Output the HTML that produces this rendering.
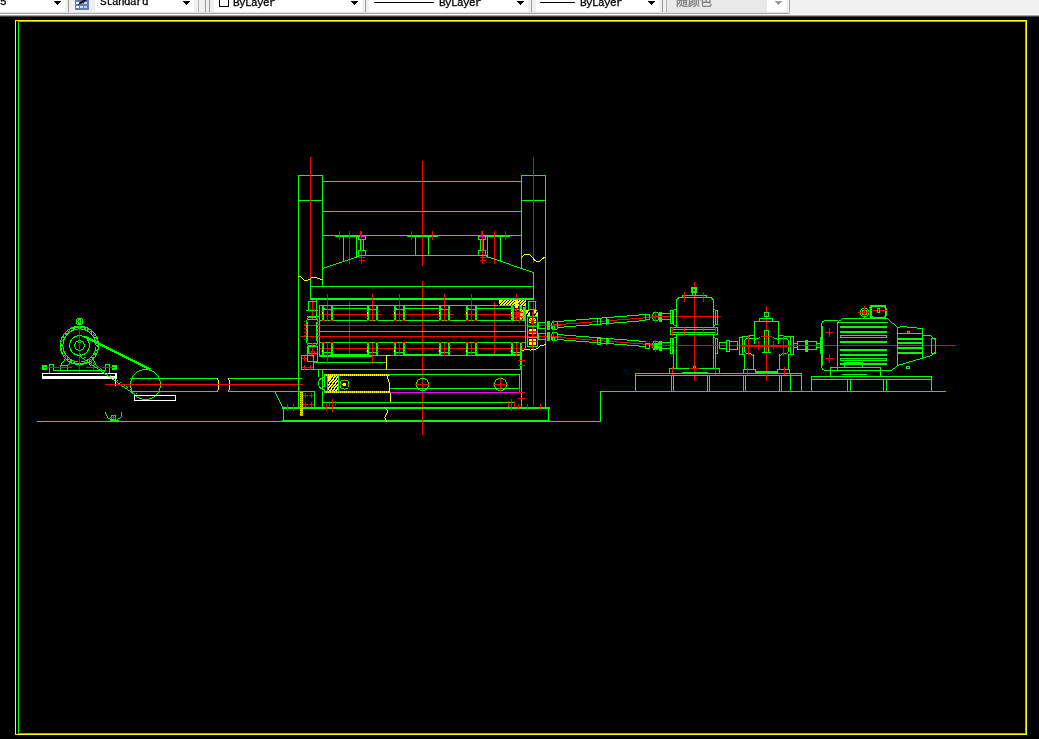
<!DOCTYPE html>
<html>
<head>
<meta charset="utf-8">
<title>AutoCAD</title>
<style>
html,body{margin:0;padding:0;background:#000;overflow:hidden}
body{width:1039px;height:739px;position:relative;font-family:"Liberation Mono","Noto Sans CJK SC",monospace;}
#tb{position:absolute;left:0;top:0;width:1039px;height:14px;background:#f0f0f0;overflow:hidden}
#tbshadow{position:absolute;left:0;top:14px;width:1039px;height:3px;background:linear-gradient(#fafafa 0,#fafafa 33%,#a0a0a0 34%,#a0a0a0 66%,#404040 67%,#404040 100%)}
.cb{position:absolute;top:-8px;height:20px;background:#fff;box-sizing:border-box;filter:grayscale(1)}
#tbline{position:absolute;left:0;top:12px;width:790px;height:2px;background:linear-gradient(#e2e4ea 0,#e2e4ea 50%,#a2a2a2 50%,#a2a2a2 100%)}
.cb span.t{position:absolute;top:4px;font-size:11px;line-height:12px;letter-spacing:-0.6px;color:#000;white-space:nowrap;-webkit-text-stroke:0.3px currentColor}
.arr{--c:#000;position:absolute;top:9px;width:7px;height:4px;background:linear-gradient(var(--c),var(--c)) 0 0/7px 1px no-repeat,linear-gradient(var(--c),var(--c)) 1px 1px/5px 1px no-repeat,linear-gradient(var(--c),var(--c)) 2px 2px/3px 1px no-repeat,linear-gradient(var(--c),var(--c)) 3px 3px/1px 1px no-repeat}
.sep{position:absolute;top:0;width:1px;height:12px;background:#9a9a9a}
.ln{position:absolute;top:10px;height:1px;background:#000}
#draw{position:absolute;left:0;top:0}
</style>
</head>
<body>
<div id="tb">
  <div class="cb" style="left:0;width:65px"><span class="t" style="left:0px">5</span><div class="arr" style="left:54px"></div></div>
  <div class="sep" style="left:68px"></div>
  <svg style="position:absolute;left:75px;top:-3px" width="14" height="13" viewBox="0 0 14 13"><rect x="0" y="0" width="14" height="13" fill="#5b80b4"/><rect x="1" y="1" width="3" height="2" fill="#fff"/><rect x="5" y="1" width="3" height="2" fill="#e8eefc"/><rect x="9" y="1" width="3" height="2" fill="#dfe8fb"/><rect x="1" y="5" width="3" height="2" fill="#fff"/><rect x="5" y="5" width="3" height="2" fill="#dfe8fb"/><rect x="9" y="5" width="3" height="2" fill="#c4d6fa"/><rect x="1" y="9" width="3" height="2" fill="#fff"/><rect x="5" y="9" width="3" height="2" fill="#d4e2fc"/><rect x="9" y="9" width="3" height="2" fill="#bcd0fa"/><path d="M3 8L5 5L10 2L12 3L8 6Z" fill="#111"/></svg>
  <div class="cb" style="left:95px;width:99px"><span class="t" style="left:5px">Standard</span><div class="arr" style="left:88px"></div></div>
  <div class="sep" style="left:198px;background:#b8b8b8"></div>
  <div class="sep" style="left:205px"></div>
  <div class="sep" style="left:209px"></div>
  <div class="cb" style="left:214px;width:148px"><div style="position:absolute;left:5px;width:8px;height:8px;border:1px solid #000;top:5px"></div><span class="t" style="left:19px;top:5px">ByLayer</span><div class="arr" style="left:137px"></div></div>
  <div class="sep" style="left:365px"></div>
  <div class="cb" style="left:369px;width:159px"><div class="ln" style="left:5px;width:60px"></div><span class="t" style="left:70px;top:5px">ByLayer</span><div class="arr" style="left:148px"></div></div>
  <div class="sep" style="left:531px"></div>
  <div class="cb" style="left:536px;width:123px"><div class="ln" style="left:4px;width:35px"></div><span class="t" style="left:44px;top:5px">ByLayer</span><div class="arr" style="left:112px"></div></div>
  <div class="sep" style="left:662px"></div>
  <div class="cb" style="left:666px;width:120px;background:#e9e9e9;border-right:1px solid #a8a8a8;border-left:1px solid #b4b4b4"><span class="t" style="left:9px;top:4px;color:#787878;letter-spacing:0;font-size:12px;line-height:14px">随颜色</span><div style="position:absolute;left:100px;top:0;width:19px;height:20px;background:#fff"></div><div class="arr" style="left:108px;--c:#a0a0a0"></div></div>
  <div class="sep" style="left:789px;background:#a8a8a8;height:13px"></div>
  <div id="tbline"></div>
</div>
<div id="tbshadow"></div>
<svg id="draw" width="1039" height="739" viewBox="0 0 1039 739" shape-rendering="crispEdges">
<rect x="15.5" y="20.5" width="1011" height="714" fill="none" stroke="#ffff00" stroke-width="1"/>
<rect x="18.5" y="21.5" width="1007" height="712" fill="none" stroke="#00ff00" stroke-width="1"/>
<rect x="37" y="421" width="564" height="1" fill="#00ff00"/>
<rect x="282" y="420" width="268" height="1" fill="#00ff00"/>
<rect x="600" y="391" width="1" height="31" fill="#00ff00"/>
<rect x="600" y="391" width="346" height="1" fill="#00ff00"/>
<circle cx="79.5" cy="321.5" r="3.3" fill="none" stroke="#00ff00" stroke-width="1"/>
<ellipse cx="79.5" cy="321.5" rx="1.5" ry="2.5" fill="none" stroke="#00ff00"/>
<rect x="79" y="324" width="1" height="3" fill="#00ff00"/>
<circle cx="79.5" cy="345.5" r="19.2" fill="none" stroke="#00ff00" stroke-width="1"/>
<circle cx="79.5" cy="345.5" r="16.6" fill="none" stroke="#00ff00" stroke-width="1"/>
<circle cx="79.5" cy="345.5" r="18" fill="none" stroke="#00ff00" stroke-width="1" stroke-dasharray="2 2"/>
<path d="M73 328 A18 18 0 0 1 86 328 M73 363 A18 18 0 0 0 86 363" fill="none" stroke="#00ff00" stroke-width="2"/>
<circle cx="79.5" cy="345.5" r="10" fill="none" stroke="#00ff00" stroke-width="1"/>
<circle cx="79.5" cy="345.5" r="4.8" fill="none" stroke="#00ff00" stroke-width="1"/>
<circle cx="79.5" cy="342.5" r="0.8" fill="#00ff00" stroke="#00ff00" stroke-width="1"/>
<rect x="79" y="325" width="1" height="48" fill="#ff0000"/>
<rect x="65" y="358" width="1" height="1" fill="#00ff00"/>
<rect x="64" y="359" width="1" height="2" fill="#00ff00"/>
<rect x="63" y="361" width="1" height="1" fill="#00ff00"/>
<rect x="62" y="362" width="1" height="1" fill="#00ff00"/>
<rect x="61" y="363" width="1" height="2" fill="#00ff00"/>
<rect x="60" y="365" width="1" height="1" fill="#00ff00"/>
<rect x="70" y="361" width="1" height="1" fill="#00ff00"/>
<rect x="69" y="362" width="1" height="2" fill="#00ff00"/>
<rect x="68" y="364" width="1" height="1" fill="#00ff00"/>
<rect x="67" y="365" width="1" height="1" fill="#00ff00"/>
<rect x="92" y="358" width="1" height="1" fill="#00ff00"/>
<rect x="93" y="359" width="1" height="2" fill="#00ff00"/>
<rect x="94" y="361" width="1" height="2" fill="#00ff00"/>
<rect x="95" y="363" width="1" height="2" fill="#00ff00"/>
<rect x="96" y="365" width="1" height="1" fill="#00ff00"/>
<rect x="87" y="361" width="1" height="1" fill="#00ff00"/>
<rect x="88" y="362" width="1" height="1" fill="#00ff00"/>
<rect x="89" y="363" width="1" height="2" fill="#00ff00"/>
<rect x="90" y="365" width="1" height="1" fill="#00ff00"/>
<rect x="42" y="365" width="5" height="5" fill="#00ff00"/>
<rect x="112" y="365" width="5" height="5" fill="#00ff00"/>
<rect x="46" y="367" width="4" height="1" fill="#00ff00"/>
<rect x="109" y="367" width="4" height="1" fill="#00ff00"/>
<rect x="49" y="364" width="1" height="9" fill="#00ff00"/>
<rect x="49" y="364" width="5" height="1" fill="#00ff00"/>
<rect x="53" y="364" width="1" height="7" fill="#00ff00"/>
<rect x="53" y="370" width="53" height="1" fill="#00ff00"/>
<rect x="105" y="364" width="1" height="7" fill="#00ff00"/>
<rect x="105" y="364" width="5" height="1" fill="#00ff00"/>
<rect x="109" y="364" width="1" height="9" fill="#00ff00"/>
<rect x="60.5" y="365.5" width="7" height="5" fill="none" stroke="#00ff00" stroke-width="1"/>
<rect x="44" y="367" width="15" height="1" fill="#ff0000"/>
<rect x="60" y="367" width="12" height="1" fill="#ff0000"/>
<rect x="86" y="367" width="14" height="1" fill="#ff0000"/>
<rect x="102" y="367" width="13" height="1" fill="#ff0000"/>
<rect x="93" y="362" width="1" height="10" fill="#ff0000"/>
<rect x="42.5" y="373.5" width="74" height="5" fill="none" stroke="#ffffff" stroke-width="1"/>
<rect x="42" y="376" width="75" height="3" fill="#ffffff"/>
<rect x="115" y="373" width="1" height="13" fill="#ffffff"/>
<line x1="84.5" y1="336.5" x2="150.5" y2="369.5" stroke="#00ff00" stroke-width="2"/>
<rect x="77" y="354" width="1" height="1" fill="#00ff00"/>
<rect x="78" y="355" width="2" height="1" fill="#00ff00"/>
<rect x="80" y="356" width="1" height="1" fill="#00ff00"/>
<rect x="81" y="357" width="1" height="1" fill="#00ff00"/>
<rect x="82" y="358" width="2" height="1" fill="#00ff00"/>
<rect x="84" y="359" width="1" height="1" fill="#00ff00"/>
<rect x="85" y="360" width="2" height="1" fill="#00ff00"/>
<rect x="87" y="361" width="1" height="1" fill="#00ff00"/>
<rect x="88" y="362" width="2" height="1" fill="#00ff00"/>
<rect x="90" y="363" width="1" height="1" fill="#00ff00"/>
<rect x="91" y="364" width="1" height="1" fill="#00ff00"/>
<rect x="92" y="365" width="2" height="1" fill="#00ff00"/>
<rect x="94" y="366" width="1" height="1" fill="#00ff00"/>
<rect x="95" y="367" width="2" height="1" fill="#00ff00"/>
<rect x="97" y="368" width="1" height="1" fill="#00ff00"/>
<rect x="98" y="369" width="2" height="1" fill="#00ff00"/>
<rect x="100" y="370" width="1" height="1" fill="#00ff00"/>
<rect x="101" y="371" width="1" height="1" fill="#00ff00"/>
<rect x="102" y="372" width="2" height="1" fill="#00ff00"/>
<rect x="104" y="373" width="1" height="1" fill="#00ff00"/>
<rect x="105" y="374" width="2" height="1" fill="#00ff00"/>
<rect x="107" y="375" width="1" height="1" fill="#00ff00"/>
<rect x="108" y="376" width="2" height="1" fill="#00ff00"/>
<rect x="110" y="377" width="1" height="1" fill="#00ff00"/>
<rect x="111" y="378" width="1" height="1" fill="#00ff00"/>
<rect x="112" y="379" width="2" height="1" fill="#00ff00"/>
<rect x="114" y="380" width="1" height="1" fill="#00ff00"/>
<rect x="115" y="381" width="2" height="1" fill="#00ff00"/>
<rect x="117" y="382" width="1" height="1" fill="#00ff00"/>
<rect x="118" y="383" width="2" height="1" fill="#00ff00"/>
<rect x="120" y="384" width="1" height="1" fill="#00ff00"/>
<rect x="121" y="385" width="1" height="1" fill="#00ff00"/>
<rect x="122" y="386" width="2" height="1" fill="#00ff00"/>
<rect x="124" y="387" width="1" height="1" fill="#00ff00"/>
<rect x="125" y="388" width="2" height="1" fill="#00ff00"/>
<rect x="127" y="389" width="1" height="1" fill="#00ff00"/>
<rect x="128" y="390" width="2" height="1" fill="#00ff00"/>
<rect x="130" y="391" width="1" height="1" fill="#00ff00"/>
<rect x="131" y="392" width="1" height="1" fill="#00ff00"/>
<rect x="132" y="393" width="2" height="1" fill="#00ff00"/>
<rect x="134" y="394" width="1" height="1" fill="#00ff00"/>
<line x1="80.5" y1="354.5" x2="137.5" y2="394.5" stroke="#00ff00" stroke-dasharray="2 2"/>
<circle cx="145.5" cy="384.5" r="15" fill="none" stroke="#00ff00" stroke-width="1"/>
<rect x="130" y="378" width="88" height="1" fill="#00ff00"/>
<rect x="130" y="391" width="88" height="1" fill="#00ff00"/>
<rect x="228" y="378" width="74" height="1" fill="#00ff00"/>
<rect x="228" y="391" width="74" height="1" fill="#00ff00"/>
<path d="M217.5 378.5 Q220.5 385 217.5 391.5" fill="none" stroke="#ffff00" stroke-width="1"/>
<path d="M228.5 378.5 Q231.5 385 228.5 391.5" fill="none" stroke="#ffff00" stroke-width="1"/>
<rect x="105" y="384" width="198" height="1" fill="#ff0000"/>
<rect x="134.5" y="395.5" width="41" height="5" fill="none" stroke="#ffffff" stroke-width="1"/>
<circle cx="113.5" cy="417.5" r="2.5" fill="none" stroke="#00ff00" stroke-width="1"/>
<rect x="111" y="417" width="5" height="1" fill="#ff0000"/>
<rect x="113" y="415" width="1" height="5" fill="#ff0000"/>
<rect x="105" y="412" width="1" height="2" fill="#00ff00"/>
<rect x="106" y="414" width="1" height="2" fill="#00ff00"/>
<rect x="107" y="416" width="1" height="2" fill="#00ff00"/>
<rect x="107" y="417" width="1" height="1" fill="#00ff00"/>
<rect x="108" y="418" width="2" height="1" fill="#00ff00"/>
<rect x="110" y="419" width="1" height="1" fill="#00ff00"/>
<rect x="121" y="412" width="1" height="5" fill="#00ff00"/>
<rect x="117" y="419" width="1" height="1" fill="#00ff00"/>
<rect x="118" y="418" width="2" height="1" fill="#00ff00"/>
<rect x="120" y="417" width="1" height="1" fill="#00ff00"/>
<rect x="121" y="416" width="1" height="1" fill="#00ff00"/>
<rect x="110" y="420" width="9" height="1" fill="#00ff00"/>
<rect x="298" y="175" width="1" height="233" fill="#00ff00"/>
<rect x="322" y="175" width="1" height="112" fill="#00ff00"/>
<rect x="298" y="175" width="25" height="1" fill="#00ff00"/>
<rect x="298" y="200" width="25" height="1" fill="#00ff00"/>
<rect x="521" y="175" width="1" height="94" fill="#00ff00"/>
<rect x="545" y="175" width="1" height="232" fill="#00ff00"/>
<rect x="521" y="175" width="25" height="1" fill="#00ff00"/>
<rect x="521" y="200" width="25" height="1" fill="#00ff00"/>
<rect x="322" y="181" width="200" height="1" fill="#00ff00"/>
<rect x="322" y="211" width="200" height="1" fill="#00ff00"/>
<rect x="322" y="235" width="200" height="1" fill="#00ff00"/>
<rect x="310" y="157" width="1" height="123" fill="#ff0000"/>
<rect x="310" y="279" width="1" height="21" fill="#00ff00"/>
<rect x="422" y="161" width="1" height="105" fill="#ff0000"/>
<rect x="422" y="281" width="1" height="154" fill="#ff0000"/>
<rect x="533" y="157" width="1" height="106" fill="#ff0000"/>
<rect x="533" y="272" width="1" height="28" fill="#00ff00"/>
<rect x="533" y="299" width="1" height="107" fill="#ff0000"/>
<rect x="312" y="298" width="1" height="22" fill="#ff0000"/>
<rect x="335" y="236" width="31" height="1" fill="#00ff00"/>
<rect x="343" y="236" width="1" height="26" fill="#00ff00"/>
<rect x="356" y="236" width="1" height="21" fill="#00ff00"/>
<rect x="339" y="231" width="1" height="9" fill="#ff0000"/>
<rect x="349" y="231" width="1" height="33" fill="#ff0000"/>
<rect x="407" y="236" width="31" height="1" fill="#00ff00"/>
<rect x="415" y="236" width="1" height="20" fill="#00ff00"/>
<rect x="428" y="236" width="1" height="20" fill="#00ff00"/>
<rect x="411" y="231" width="1" height="9" fill="#ff0000"/>
<rect x="432" y="231" width="1" height="9" fill="#ff0000"/>
<rect x="478" y="236" width="32" height="1" fill="#00ff00"/>
<rect x="487" y="236" width="1" height="22" fill="#00ff00"/>
<rect x="500" y="236" width="1" height="26" fill="#00ff00"/>
<rect x="494" y="231" width="1" height="33" fill="#ff0000"/>
<rect x="505" y="231" width="1" height="9" fill="#ff0000"/>
<rect x="358.5" y="235.5" width="7" height="4" fill="none" stroke="#00ff00" stroke-width="1"/>
<rect x="360.5" y="239.5" width="3" height="11" fill="none" stroke="#00ff00" stroke-width="1"/>
<rect x="358.5" y="250.5" width="7" height="5" fill="none" stroke="#00ff00" stroke-width="1"/>
<rect x="361" y="231" width="1" height="33" fill="#ff0000"/>
<rect x="360" y="231" width="2" height="6" fill="#ff0000"/>
<rect x="359" y="257" width="6" height="1" fill="#ff0000"/>
<rect x="359" y="260" width="6" height="1" fill="#ff0000"/>
<rect x="360" y="236" width="5" height="1" fill="#ff00ff"/>
<rect x="478.5" y="235.5" width="7" height="4" fill="none" stroke="#00ff00" stroke-width="1"/>
<rect x="480.5" y="239.5" width="3" height="11" fill="none" stroke="#00ff00" stroke-width="1"/>
<rect x="478.5" y="250.5" width="7" height="5" fill="none" stroke="#00ff00" stroke-width="1"/>
<rect x="482" y="231" width="1" height="33" fill="#ff0000"/>
<rect x="481" y="231" width="2" height="6" fill="#ff0000"/>
<rect x="480" y="257" width="6" height="1" fill="#ff0000"/>
<rect x="480" y="260" width="6" height="1" fill="#ff0000"/>
<rect x="480" y="236" width="5" height="1" fill="#ff00ff"/>
<rect x="358" y="255" width="129" height="1" fill="#00ff00"/>
<rect x="322" y="268" width="2" height="1" fill="#00ff00"/>
<rect x="324" y="267" width="3" height="1" fill="#00ff00"/>
<rect x="327" y="266" width="3" height="1" fill="#00ff00"/>
<rect x="330" y="265" width="3" height="1" fill="#00ff00"/>
<rect x="333" y="264" width="3" height="1" fill="#00ff00"/>
<rect x="336" y="263" width="3" height="1" fill="#00ff00"/>
<rect x="339" y="262" width="3" height="1" fill="#00ff00"/>
<rect x="342" y="261" width="3" height="1" fill="#00ff00"/>
<rect x="345" y="260" width="3" height="1" fill="#00ff00"/>
<rect x="348" y="259" width="3" height="1" fill="#00ff00"/>
<rect x="351" y="258" width="3" height="1" fill="#00ff00"/>
<rect x="354" y="257" width="3" height="1" fill="#00ff00"/>
<rect x="357" y="256" width="2" height="1" fill="#00ff00"/>
<rect x="486" y="256" width="2" height="1" fill="#00ff00"/>
<rect x="488" y="257" width="3" height="1" fill="#00ff00"/>
<rect x="491" y="258" width="3" height="1" fill="#00ff00"/>
<rect x="494" y="259" width="3" height="1" fill="#00ff00"/>
<rect x="497" y="260" width="3" height="1" fill="#00ff00"/>
<rect x="500" y="261" width="3" height="1" fill="#00ff00"/>
<rect x="503" y="262" width="3" height="1" fill="#00ff00"/>
<rect x="506" y="263" width="3" height="1" fill="#00ff00"/>
<rect x="509" y="264" width="2" height="1" fill="#00ff00"/>
<rect x="511" y="265" width="3" height="1" fill="#00ff00"/>
<rect x="514" y="266" width="3" height="1" fill="#00ff00"/>
<rect x="517" y="267" width="3" height="1" fill="#00ff00"/>
<rect x="520" y="268" width="3" height="1" fill="#00ff00"/>
<rect x="523" y="269" width="3" height="1" fill="#00ff00"/>
<rect x="526" y="270" width="3" height="1" fill="#00ff00"/>
<rect x="529" y="271" width="3" height="1" fill="#00ff00"/>
<rect x="532" y="272" width="2" height="1" fill="#00ff00"/>
<path d="M298.5 276.5 C302 275 303 281 306 281 S310 277 314 277.5 S319 279 322.5 280" fill="none" stroke="#ffff00" stroke-width="1"/>
<path d="M521.5 258 C524 253 529 253 532 257 S537 263 540 261 S543 257 545.5 257.5" fill="none" stroke="#ffff00" stroke-width="1"/>
<rect x="310" y="286" width="224" height="1" fill="#00ff00"/>
<rect x="310" y="298" width="224" height="2" fill="#00ff00"/>
<rect x="327" y="294" width="1" height="26" fill="#ff0000"/>
<rect x="372" y="294" width="1" height="26" fill="#ff0000"/>
<rect x="399" y="294" width="1" height="26" fill="#ff0000"/>
<rect x="444" y="294" width="1" height="26" fill="#ff0000"/>
<rect x="471" y="294" width="1" height="26" fill="#ff0000"/>
<rect x="516" y="294" width="1" height="26" fill="#ff0000"/>
<rect x="349" y="302" width="1" height="53" fill="#ff0000"/>
<rect x="494" y="302" width="1" height="53" fill="#ff0000"/>
<rect x="319" y="305" width="181" height="1" fill="#00ff00"/>
<rect x="319" y="320" width="207" height="1" fill="#00ff00"/>
<rect x="319" y="305" width="1" height="52" fill="#00ff00"/>
<rect x="331" y="308" width="38" height="1" fill="#00ff00"/>
<rect x="404" y="308" width="37" height="1" fill="#00ff00"/>
<rect x="477" y="308" width="36" height="1" fill="#00ff00"/>
<rect x="320" y="314" width="61" height="1" fill="#ff0000"/>
<rect x="392" y="314" width="61" height="1" fill="#ff0000"/>
<rect x="464" y="314" width="62" height="1" fill="#ff0000"/>
<rect x="319" y="331" width="207" height="1" fill="#00ff00"/>
<rect x="319" y="342" width="207" height="1" fill="#00ff00"/>
<rect x="304" y="325" width="257" height="1" fill="#ff0000"/>
<rect x="300" y="336" width="261" height="1" fill="#ff0000"/>
<rect x="320" y="348" width="206" height="1" fill="#ff0000"/>
<rect x="319" y="355" width="203" height="1" fill="#00ff00"/>
<rect x="319" y="356" width="54" height="1" fill="#00ff00"/>
<rect x="330" y="354" width="39" height="1" fill="#00ff00"/>
<rect x="404" y="354" width="37" height="1" fill="#00ff00"/>
<rect x="477" y="354" width="45" height="1" fill="#00ff00"/>
<rect x="322" y="306" width="2" height="15" fill="#00ff00"/>
<rect x="331" y="306" width="2" height="15" fill="#00ff00"/>
<rect x="324" y="309" width="7" height="1" fill="#00ff00"/>
<rect x="323" y="307" width="1" height="1" fill="#00ff00"/>
<rect x="324" y="308" width="1" height="2" fill="#00ff00"/>
<rect x="331" y="307" width="1" height="2" fill="#00ff00"/>
<rect x="330" y="309" width="1" height="1" fill="#00ff00"/>
<rect x="321" y="311" width="2" height="1" fill="#ff0000"/>
<rect x="332" y="311" width="2" height="1" fill="#ff0000"/>
<rect x="321" y="317" width="2" height="1" fill="#ff0000"/>
<rect x="332" y="317" width="2" height="1" fill="#ff0000"/>
<rect x="322" y="320" width="3" height="1" fill="#ff0000"/>
<rect x="330" y="320" width="3" height="1" fill="#ff0000"/>
<rect x="322" y="312" width="1" height="2" fill="#ffff00"/>
<rect x="327" y="306" width="1" height="15" fill="#ff0000"/>
<rect x="322" y="343" width="2" height="13" fill="#00ff00"/>
<rect x="331" y="343" width="2" height="13" fill="#00ff00"/>
<rect x="324" y="352" width="7" height="1" fill="#00ff00"/>
<rect x="321" y="345" width="2" height="1" fill="#ff0000"/>
<rect x="332" y="345" width="2" height="1" fill="#ff0000"/>
<rect x="321" y="351" width="2" height="1" fill="#ff0000"/>
<rect x="332" y="351" width="2" height="1" fill="#ff0000"/>
<rect x="322" y="342" width="3" height="1" fill="#ff0000"/>
<rect x="330" y="342" width="3" height="1" fill="#ff0000"/>
<rect x="322" y="350" width="1" height="2" fill="#ffff00"/>
<rect x="327" y="343" width="1" height="13" fill="#ff0000"/>
<rect x="367" y="306" width="2" height="15" fill="#00ff00"/>
<rect x="376" y="306" width="2" height="15" fill="#00ff00"/>
<rect x="369" y="309" width="7" height="1" fill="#00ff00"/>
<rect x="368" y="307" width="1" height="1" fill="#00ff00"/>
<rect x="369" y="308" width="1" height="2" fill="#00ff00"/>
<rect x="376" y="307" width="1" height="2" fill="#00ff00"/>
<rect x="375" y="309" width="1" height="1" fill="#00ff00"/>
<rect x="366" y="311" width="2" height="1" fill="#ff0000"/>
<rect x="377" y="311" width="2" height="1" fill="#ff0000"/>
<rect x="366" y="317" width="2" height="1" fill="#ff0000"/>
<rect x="377" y="317" width="2" height="1" fill="#ff0000"/>
<rect x="367" y="320" width="3" height="1" fill="#ff0000"/>
<rect x="375" y="320" width="3" height="1" fill="#ff0000"/>
<rect x="367" y="312" width="1" height="2" fill="#ffff00"/>
<rect x="372" y="306" width="1" height="15" fill="#ff0000"/>
<rect x="367" y="343" width="2" height="13" fill="#00ff00"/>
<rect x="376" y="343" width="2" height="13" fill="#00ff00"/>
<rect x="369" y="352" width="7" height="1" fill="#00ff00"/>
<rect x="366" y="345" width="2" height="1" fill="#ff0000"/>
<rect x="377" y="345" width="2" height="1" fill="#ff0000"/>
<rect x="366" y="351" width="2" height="1" fill="#ff0000"/>
<rect x="377" y="351" width="2" height="1" fill="#ff0000"/>
<rect x="367" y="342" width="3" height="1" fill="#ff0000"/>
<rect x="375" y="342" width="3" height="1" fill="#ff0000"/>
<rect x="367" y="350" width="1" height="2" fill="#ffff00"/>
<rect x="372" y="343" width="1" height="13" fill="#ff0000"/>
<rect x="394" y="306" width="2" height="15" fill="#00ff00"/>
<rect x="403" y="306" width="2" height="15" fill="#00ff00"/>
<rect x="396" y="309" width="7" height="1" fill="#00ff00"/>
<rect x="395" y="307" width="1" height="1" fill="#00ff00"/>
<rect x="396" y="308" width="1" height="2" fill="#00ff00"/>
<rect x="403" y="307" width="1" height="2" fill="#00ff00"/>
<rect x="402" y="309" width="1" height="1" fill="#00ff00"/>
<rect x="393" y="311" width="2" height="1" fill="#ff0000"/>
<rect x="404" y="311" width="2" height="1" fill="#ff0000"/>
<rect x="393" y="317" width="2" height="1" fill="#ff0000"/>
<rect x="404" y="317" width="2" height="1" fill="#ff0000"/>
<rect x="394" y="320" width="3" height="1" fill="#ff0000"/>
<rect x="402" y="320" width="3" height="1" fill="#ff0000"/>
<rect x="394" y="312" width="1" height="2" fill="#ffff00"/>
<rect x="399" y="306" width="1" height="15" fill="#ff0000"/>
<rect x="394" y="343" width="2" height="13" fill="#00ff00"/>
<rect x="403" y="343" width="2" height="13" fill="#00ff00"/>
<rect x="396" y="352" width="7" height="1" fill="#00ff00"/>
<rect x="393" y="345" width="2" height="1" fill="#ff0000"/>
<rect x="404" y="345" width="2" height="1" fill="#ff0000"/>
<rect x="393" y="351" width="2" height="1" fill="#ff0000"/>
<rect x="404" y="351" width="2" height="1" fill="#ff0000"/>
<rect x="394" y="342" width="3" height="1" fill="#ff0000"/>
<rect x="402" y="342" width="3" height="1" fill="#ff0000"/>
<rect x="394" y="350" width="1" height="2" fill="#ffff00"/>
<rect x="399" y="343" width="1" height="13" fill="#ff0000"/>
<rect x="439" y="306" width="2" height="15" fill="#00ff00"/>
<rect x="448" y="306" width="2" height="15" fill="#00ff00"/>
<rect x="441" y="309" width="7" height="1" fill="#00ff00"/>
<rect x="440" y="307" width="1" height="1" fill="#00ff00"/>
<rect x="441" y="308" width="1" height="2" fill="#00ff00"/>
<rect x="448" y="307" width="1" height="2" fill="#00ff00"/>
<rect x="447" y="309" width="1" height="1" fill="#00ff00"/>
<rect x="438" y="311" width="2" height="1" fill="#ff0000"/>
<rect x="449" y="311" width="2" height="1" fill="#ff0000"/>
<rect x="438" y="317" width="2" height="1" fill="#ff0000"/>
<rect x="449" y="317" width="2" height="1" fill="#ff0000"/>
<rect x="439" y="320" width="3" height="1" fill="#ff0000"/>
<rect x="447" y="320" width="3" height="1" fill="#ff0000"/>
<rect x="439" y="312" width="1" height="2" fill="#ffff00"/>
<rect x="444" y="306" width="1" height="15" fill="#ff0000"/>
<rect x="439" y="343" width="2" height="13" fill="#00ff00"/>
<rect x="448" y="343" width="2" height="13" fill="#00ff00"/>
<rect x="441" y="352" width="7" height="1" fill="#00ff00"/>
<rect x="438" y="345" width="2" height="1" fill="#ff0000"/>
<rect x="449" y="345" width="2" height="1" fill="#ff0000"/>
<rect x="438" y="351" width="2" height="1" fill="#ff0000"/>
<rect x="449" y="351" width="2" height="1" fill="#ff0000"/>
<rect x="439" y="342" width="3" height="1" fill="#ff0000"/>
<rect x="447" y="342" width="3" height="1" fill="#ff0000"/>
<rect x="439" y="350" width="1" height="2" fill="#ffff00"/>
<rect x="444" y="343" width="1" height="13" fill="#ff0000"/>
<rect x="466" y="306" width="2" height="15" fill="#00ff00"/>
<rect x="475" y="306" width="2" height="15" fill="#00ff00"/>
<rect x="468" y="309" width="7" height="1" fill="#00ff00"/>
<rect x="467" y="307" width="1" height="1" fill="#00ff00"/>
<rect x="468" y="308" width="1" height="2" fill="#00ff00"/>
<rect x="475" y="307" width="1" height="2" fill="#00ff00"/>
<rect x="474" y="309" width="1" height="1" fill="#00ff00"/>
<rect x="465" y="311" width="2" height="1" fill="#ff0000"/>
<rect x="476" y="311" width="2" height="1" fill="#ff0000"/>
<rect x="465" y="317" width="2" height="1" fill="#ff0000"/>
<rect x="476" y="317" width="2" height="1" fill="#ff0000"/>
<rect x="466" y="320" width="3" height="1" fill="#ff0000"/>
<rect x="474" y="320" width="3" height="1" fill="#ff0000"/>
<rect x="466" y="312" width="1" height="2" fill="#ffff00"/>
<rect x="471" y="306" width="1" height="15" fill="#ff0000"/>
<rect x="466" y="343" width="2" height="13" fill="#00ff00"/>
<rect x="475" y="343" width="2" height="13" fill="#00ff00"/>
<rect x="468" y="352" width="7" height="1" fill="#00ff00"/>
<rect x="465" y="345" width="2" height="1" fill="#ff0000"/>
<rect x="476" y="345" width="2" height="1" fill="#ff0000"/>
<rect x="465" y="351" width="2" height="1" fill="#ff0000"/>
<rect x="476" y="351" width="2" height="1" fill="#ff0000"/>
<rect x="466" y="342" width="3" height="1" fill="#ff0000"/>
<rect x="474" y="342" width="3" height="1" fill="#ff0000"/>
<rect x="466" y="350" width="1" height="2" fill="#ffff00"/>
<rect x="471" y="343" width="1" height="13" fill="#ff0000"/>
<rect x="511" y="306" width="2" height="15" fill="#00ff00"/>
<rect x="520" y="306" width="2" height="15" fill="#00ff00"/>
<rect x="513" y="309" width="7" height="1" fill="#00ff00"/>
<rect x="512" y="307" width="1" height="1" fill="#00ff00"/>
<rect x="513" y="308" width="1" height="2" fill="#00ff00"/>
<rect x="520" y="307" width="1" height="2" fill="#00ff00"/>
<rect x="519" y="309" width="1" height="1" fill="#00ff00"/>
<rect x="510" y="311" width="2" height="1" fill="#ff0000"/>
<rect x="521" y="311" width="2" height="1" fill="#ff0000"/>
<rect x="510" y="317" width="2" height="1" fill="#ff0000"/>
<rect x="521" y="317" width="2" height="1" fill="#ff0000"/>
<rect x="511" y="320" width="3" height="1" fill="#ff0000"/>
<rect x="519" y="320" width="3" height="1" fill="#ff0000"/>
<rect x="511" y="312" width="1" height="2" fill="#ffff00"/>
<rect x="516" y="306" width="1" height="15" fill="#ff0000"/>
<rect x="511" y="343" width="2" height="13" fill="#00ff00"/>
<rect x="520" y="343" width="2" height="13" fill="#00ff00"/>
<rect x="513" y="352" width="7" height="1" fill="#00ff00"/>
<rect x="510" y="345" width="2" height="1" fill="#ff0000"/>
<rect x="521" y="345" width="2" height="1" fill="#ff0000"/>
<rect x="510" y="351" width="2" height="1" fill="#ff0000"/>
<rect x="521" y="351" width="2" height="1" fill="#ff0000"/>
<rect x="511" y="342" width="3" height="1" fill="#ff0000"/>
<rect x="519" y="342" width="3" height="1" fill="#ff0000"/>
<rect x="511" y="350" width="1" height="2" fill="#ffff00"/>
<rect x="516" y="343" width="1" height="13" fill="#ff0000"/>
<rect x="308.5" y="301.5" width="8" height="9" fill="none" stroke="#00ff00" stroke-width="1"/>
<rect x="316" y="299" width="1" height="18" fill="#00ff00"/>
<rect x="307" y="316" width="13" height="1" fill="#00ff00"/>
<rect x="306" y="310" width="12" height="1" fill="#00ff00"/>
<rect x="309" y="309" width="1" height="3" fill="#ff0000"/>
<rect x="311" y="309" width="1" height="3" fill="#ff0000"/>
<rect x="314" y="309" width="1" height="3" fill="#ff0000"/>
<rect x="308" y="317" width="1" height="1" fill="#00ff00"/>
<rect x="307" y="318" width="1" height="2" fill="#00ff00"/>
<rect x="306" y="320" width="1" height="1" fill="#00ff00"/>
<rect x="306" y="320" width="1" height="23" fill="#00ff00"/>
<rect x="306" y="342" width="1" height="1" fill="#00ff00"/>
<rect x="307" y="343" width="1" height="2" fill="#00ff00"/>
<rect x="308" y="345" width="1" height="1" fill="#00ff00"/>
<rect x="308" y="345" width="8" height="1" fill="#00ff00"/>
<rect x="317" y="342" width="1" height="1" fill="#00ff00"/>
<rect x="316" y="343" width="1" height="2" fill="#00ff00"/>
<rect x="315" y="345" width="1" height="1" fill="#00ff00"/>
<rect x="317" y="320" width="1" height="23" fill="#00ff00"/>
<rect x="315" y="317" width="1" height="1" fill="#00ff00"/>
<rect x="316" y="318" width="1" height="2" fill="#00ff00"/>
<rect x="317" y="320" width="1" height="1" fill="#00ff00"/>
<rect x="308" y="317" width="8" height="1" fill="#00ff00"/>
<rect x="306" y="322" width="2" height="19" fill="#00ff00"/>
<rect x="316" y="322" width="2" height="19" fill="#00ff00"/>
<rect x="307" y="319" width="11" height="1" fill="#00ff00"/>
<rect x="307" y="343" width="11" height="1" fill="#00ff00"/>
<rect x="304" y="321" width="3" height="1" fill="#ff0000"/>
<rect x="317" y="321" width="2" height="1" fill="#ff0000"/>
<rect x="304" y="324" width="3" height="1" fill="#ff0000"/>
<rect x="317" y="324" width="2" height="1" fill="#ff0000"/>
<rect x="304" y="328" width="3" height="1" fill="#ff0000"/>
<rect x="317" y="328" width="2" height="1" fill="#ff0000"/>
<rect x="304" y="332" width="3" height="1" fill="#ff0000"/>
<rect x="317" y="332" width="2" height="1" fill="#ff0000"/>
<rect x="304" y="335" width="3" height="1" fill="#ff0000"/>
<rect x="317" y="335" width="2" height="1" fill="#ff0000"/>
<rect x="304" y="339" width="3" height="1" fill="#ff0000"/>
<rect x="317" y="339" width="2" height="1" fill="#ff0000"/>
<rect x="308.5" y="346.5" width="9" height="7" fill="none" stroke="#00ff00" stroke-width="1"/>
<rect x="309" y="351" width="1" height="4" fill="#ff0000"/>
<rect x="311" y="351" width="1" height="4" fill="#ff0000"/>
<rect x="314" y="351" width="1" height="4" fill="#ff0000"/>
<rect x="312" y="343" width="1" height="14" fill="#ff0000"/>
<rect x="499" y="300" width="16" height="6" fill="#ffff00"/>
<rect x="518" y="300" width="8" height="6" fill="#ffff00"/>
<line x1="498" y1="306" x2="504" y2="300" stroke="#000" stroke-width="1.2"/>
<line x1="501" y1="306" x2="507" y2="300" stroke="#000" stroke-width="1.2"/>
<line x1="504" y1="306" x2="510" y2="300" stroke="#000" stroke-width="1.2"/>
<line x1="507" y1="306" x2="513" y2="300" stroke="#000" stroke-width="1.2"/>
<line x1="510" y1="306" x2="516" y2="300" stroke="#000" stroke-width="1.2"/>
<line x1="513" y1="306" x2="519" y2="300" stroke="#000" stroke-width="1.2"/>
<line x1="516" y1="306" x2="522" y2="300" stroke="#000" stroke-width="1.2"/>
<line x1="519" y1="306" x2="525" y2="300" stroke="#000" stroke-width="1.2"/>
<line x1="522" y1="306" x2="528" y2="300" stroke="#000" stroke-width="1.2"/>
<line x1="525" y1="306" x2="531" y2="300" stroke="#000" stroke-width="1.2"/>
<rect x="499" y="299" width="28" height="1" fill="#00ff00"/>
<rect x="499" y="305" width="14" height="1" fill="#00ff00"/>
<rect x="525" y="305" width="1" height="43" fill="#00ff00"/>
<rect x="528.5" y="301.5" width="7" height="8" fill="none" stroke="#00ff00" stroke-width="1"/>
<rect x="515" y="300" width="3" height="8" fill="#ffff00"/>
<rect x="519" y="309" width="4" height="10" fill="#ffff00"/>
<rect x="519" y="303" width="1" height="20" fill="#ff0000"/>
<rect x="512" y="312" width="13" height="1" fill="#ff0000"/>
<rect x="512" y="316" width="13" height="1" fill="#ff0000"/>
<rect x="514" y="309" width="1" height="1" fill="#ff0000"/>
<rect x="515" y="310" width="1" height="1" fill="#ff0000"/>
<rect x="516" y="311" width="1" height="1" fill="#ff0000"/>
<rect x="517" y="312" width="1" height="1" fill="#ff0000"/>
<rect x="518" y="313" width="1" height="2" fill="#ff0000"/>
<rect x="519" y="315" width="1" height="1" fill="#ff0000"/>
<rect x="520" y="316" width="1" height="1" fill="#ff0000"/>
<rect x="521" y="317" width="1" height="1" fill="#ff0000"/>
<rect x="522" y="318" width="1" height="1" fill="#ff0000"/>
<rect x="522" y="309" width="1" height="1" fill="#ff0000"/>
<rect x="521" y="310" width="1" height="1" fill="#ff0000"/>
<rect x="520" y="311" width="1" height="1" fill="#ff0000"/>
<rect x="519" y="312" width="1" height="1" fill="#ff0000"/>
<rect x="518" y="313" width="1" height="2" fill="#ff0000"/>
<rect x="517" y="315" width="1" height="1" fill="#ff0000"/>
<rect x="516" y="316" width="1" height="1" fill="#ff0000"/>
<rect x="515" y="317" width="1" height="1" fill="#ff0000"/>
<rect x="514" y="318" width="1" height="1" fill="#ff0000"/>
<rect x="512" y="307" width="2" height="14" fill="#00ff00"/>
<rect x="523" y="307" width="2" height="14" fill="#00ff00"/>
<rect x="526" y="310" width="4" height="6" fill="#ffff00"/>
<rect x="534" y="310" width="4" height="6" fill="#ffff00"/>
<line x1="526" y1="316" x2="530" y2="310" stroke="#000" stroke-width="1"/>
<line x1="534" y1="316" x2="538" y2="310" stroke="#000" stroke-width="1"/>
<rect x="527.5" y="316.5" width="10" height="30" fill="none" stroke="#00ff00" stroke-width="1"/>
<rect x="529" y="318" width="7" height="5" fill="#ffff00"/>
<rect x="529" y="329" width="7" height="5" fill="#ffff00"/>
<rect x="529" y="339" width="7" height="6" fill="#ffff00"/>
<rect x="532" y="312" width="1" height="37" fill="#ff0000"/>
<rect x="528" y="321" width="10" height="1" fill="#ff0000"/>
<rect x="528" y="331" width="9" height="2" fill="#ff0000"/>
<rect x="528" y="341" width="10" height="1" fill="#ff0000"/>
<rect x="529" y="318" width="1" height="1" fill="#ff0000"/>
<rect x="530" y="319" width="1" height="1" fill="#ff0000"/>
<rect x="531" y="320" width="1" height="1" fill="#ff0000"/>
<rect x="532" y="321" width="1" height="1" fill="#ff0000"/>
<rect x="533" y="322" width="1" height="1" fill="#ff0000"/>
<rect x="534" y="323" width="1" height="1" fill="#ff0000"/>
<rect x="535" y="324" width="1" height="1" fill="#ff0000"/>
<rect x="529" y="324" width="1" height="1" fill="#ff0000"/>
<rect x="530" y="323" width="1" height="1" fill="#ff0000"/>
<rect x="531" y="322" width="1" height="1" fill="#ff0000"/>
<rect x="532" y="321" width="1" height="1" fill="#ff0000"/>
<rect x="533" y="320" width="1" height="1" fill="#ff0000"/>
<rect x="534" y="319" width="1" height="1" fill="#ff0000"/>
<rect x="535" y="318" width="1" height="1" fill="#ff0000"/>
<rect x="528" y="326" width="9" height="1" fill="#00ff00"/>
<rect x="528" y="337" width="9" height="1" fill="#00ff00"/>
<path d="M522.5 351 C525 348 528 350.5 531 350 S537 349.5 539 347 S542 345 545.5 345" fill="none" stroke="#ffff00" stroke-width="1"/>
<rect x="520" y="353" width="1" height="6" fill="#00ff00"/>
<rect x="520" y="353" width="2" height="17" fill="#00ff00"/>
<rect x="521" y="369" width="1" height="38" fill="#00ff00"/>
<rect x="313" y="362" width="74" height="1" fill="#00ff00"/>
<rect x="301" y="369" width="220" height="1" fill="#00ff00"/>
<rect x="301.5" y="355.5" width="12" height="14" fill="none" stroke="#00ff00" stroke-width="1"/>
<rect x="302" y="358" width="5" height="1" fill="#ff0000"/>
<rect x="304" y="356" width="1" height="5" fill="#ff0000"/>
<rect x="302" y="367" width="5" height="1" fill="#ff0000"/>
<rect x="304" y="365" width="1" height="5" fill="#ff0000"/>
<rect x="308" y="367" width="5" height="1" fill="#ff0000"/>
<rect x="310" y="365" width="1" height="5" fill="#ff0000"/>
<rect x="307.5" y="346.5" width="10" height="15" fill="none" stroke="#00ff00" stroke-width="1"/>
<rect x="386" y="355" width="1" height="15" fill="#ffff00"/>
<rect x="386" y="355" width="4" height="1" fill="#ffff00"/>
<rect x="327" y="356" width="1" height="8" fill="#ff0000"/>
<rect x="372" y="356" width="1" height="8" fill="#ff0000"/>
<rect x="318" y="369" width="1" height="8" fill="#00ff00"/>
<rect x="322" y="369" width="1" height="39" fill="#00ff00"/>
<rect x="324" y="374" width="1" height="2" fill="#ffff00"/>
<rect x="325" y="374" width="1" height="2" fill="#00ff00"/>
<rect x="324" y="391" width="1" height="2" fill="#ffff00"/>
<rect x="325" y="391" width="1" height="2" fill="#00ff00"/>
<rect x="326" y="374" width="1" height="2" fill="#ffff00"/>
<rect x="327" y="374" width="1" height="2" fill="#00ff00"/>
<rect x="326" y="391" width="1" height="2" fill="#ffff00"/>
<rect x="327" y="391" width="1" height="2" fill="#00ff00"/>
<rect x="328" y="374" width="1" height="2" fill="#ffff00"/>
<rect x="329" y="374" width="1" height="2" fill="#00ff00"/>
<rect x="328" y="391" width="1" height="2" fill="#ffff00"/>
<rect x="329" y="391" width="1" height="2" fill="#00ff00"/>
<rect x="330" y="374" width="1" height="2" fill="#ffff00"/>
<rect x="331" y="374" width="1" height="2" fill="#00ff00"/>
<rect x="330" y="391" width="1" height="2" fill="#ffff00"/>
<rect x="331" y="391" width="1" height="2" fill="#00ff00"/>
<rect x="332" y="374" width="1" height="2" fill="#ffff00"/>
<rect x="333" y="374" width="1" height="2" fill="#00ff00"/>
<rect x="332" y="391" width="1" height="2" fill="#ffff00"/>
<rect x="333" y="391" width="1" height="2" fill="#00ff00"/>
<rect x="334" y="374" width="1" height="2" fill="#ffff00"/>
<rect x="335" y="374" width="1" height="2" fill="#00ff00"/>
<rect x="334" y="391" width="1" height="2" fill="#ffff00"/>
<rect x="335" y="391" width="1" height="2" fill="#00ff00"/>
<rect x="336" y="374" width="1" height="2" fill="#ffff00"/>
<rect x="337" y="374" width="1" height="2" fill="#00ff00"/>
<rect x="336" y="391" width="1" height="2" fill="#ffff00"/>
<rect x="337" y="391" width="1" height="2" fill="#00ff00"/>
<rect x="338" y="374" width="1" height="2" fill="#ffff00"/>
<rect x="339" y="374" width="1" height="2" fill="#00ff00"/>
<rect x="338" y="391" width="1" height="2" fill="#ffff00"/>
<rect x="339" y="391" width="1" height="2" fill="#00ff00"/>
<rect x="340" y="374" width="1" height="2" fill="#ffff00"/>
<rect x="341" y="374" width="1" height="2" fill="#00ff00"/>
<rect x="340" y="391" width="1" height="2" fill="#ffff00"/>
<rect x="341" y="391" width="1" height="2" fill="#00ff00"/>
<rect x="342" y="374" width="1" height="2" fill="#ffff00"/>
<rect x="343" y="374" width="1" height="2" fill="#00ff00"/>
<rect x="342" y="391" width="1" height="2" fill="#ffff00"/>
<rect x="343" y="391" width="1" height="2" fill="#00ff00"/>
<rect x="344" y="374" width="1" height="2" fill="#ffff00"/>
<rect x="345" y="374" width="1" height="2" fill="#00ff00"/>
<rect x="344" y="391" width="1" height="2" fill="#ffff00"/>
<rect x="345" y="391" width="1" height="2" fill="#00ff00"/>
<rect x="346" y="374" width="1" height="2" fill="#ffff00"/>
<rect x="347" y="374" width="1" height="2" fill="#00ff00"/>
<rect x="346" y="391" width="1" height="2" fill="#ffff00"/>
<rect x="347" y="391" width="1" height="2" fill="#00ff00"/>
<rect x="348" y="374" width="1" height="2" fill="#ffff00"/>
<rect x="349" y="374" width="1" height="2" fill="#00ff00"/>
<rect x="348" y="391" width="1" height="2" fill="#ffff00"/>
<rect x="349" y="391" width="1" height="2" fill="#00ff00"/>
<rect x="350" y="374" width="1" height="2" fill="#ffff00"/>
<rect x="351" y="374" width="1" height="2" fill="#00ff00"/>
<rect x="350" y="391" width="1" height="2" fill="#ffff00"/>
<rect x="351" y="391" width="1" height="2" fill="#00ff00"/>
<rect x="352" y="374" width="1" height="2" fill="#ffff00"/>
<rect x="353" y="374" width="1" height="2" fill="#00ff00"/>
<rect x="352" y="391" width="1" height="2" fill="#ffff00"/>
<rect x="353" y="391" width="1" height="2" fill="#00ff00"/>
<rect x="354" y="374" width="1" height="2" fill="#ffff00"/>
<rect x="355" y="374" width="1" height="2" fill="#00ff00"/>
<rect x="354" y="391" width="1" height="2" fill="#ffff00"/>
<rect x="355" y="391" width="1" height="2" fill="#00ff00"/>
<rect x="356" y="374" width="1" height="2" fill="#ffff00"/>
<rect x="357" y="374" width="1" height="2" fill="#00ff00"/>
<rect x="356" y="391" width="1" height="2" fill="#ffff00"/>
<rect x="357" y="391" width="1" height="2" fill="#00ff00"/>
<rect x="358" y="374" width="1" height="2" fill="#ffff00"/>
<rect x="359" y="374" width="1" height="2" fill="#00ff00"/>
<rect x="358" y="391" width="1" height="2" fill="#ffff00"/>
<rect x="359" y="391" width="1" height="2" fill="#00ff00"/>
<rect x="360" y="374" width="1" height="2" fill="#ffff00"/>
<rect x="361" y="374" width="1" height="2" fill="#00ff00"/>
<rect x="360" y="391" width="1" height="2" fill="#ffff00"/>
<rect x="361" y="391" width="1" height="2" fill="#00ff00"/>
<rect x="362" y="374" width="1" height="2" fill="#ffff00"/>
<rect x="363" y="374" width="1" height="2" fill="#00ff00"/>
<rect x="362" y="391" width="1" height="2" fill="#ffff00"/>
<rect x="363" y="391" width="1" height="2" fill="#00ff00"/>
<rect x="364" y="374" width="1" height="2" fill="#ffff00"/>
<rect x="365" y="374" width="1" height="2" fill="#00ff00"/>
<rect x="364" y="391" width="1" height="2" fill="#ffff00"/>
<rect x="365" y="391" width="1" height="2" fill="#00ff00"/>
<rect x="366" y="374" width="1" height="2" fill="#ffff00"/>
<rect x="367" y="374" width="1" height="2" fill="#00ff00"/>
<rect x="366" y="391" width="1" height="2" fill="#ffff00"/>
<rect x="367" y="391" width="1" height="2" fill="#00ff00"/>
<rect x="368" y="374" width="1" height="2" fill="#ffff00"/>
<rect x="369" y="374" width="1" height="2" fill="#00ff00"/>
<rect x="368" y="391" width="1" height="2" fill="#ffff00"/>
<rect x="369" y="391" width="1" height="2" fill="#00ff00"/>
<rect x="370" y="374" width="1" height="2" fill="#ffff00"/>
<rect x="371" y="374" width="1" height="2" fill="#00ff00"/>
<rect x="370" y="391" width="1" height="2" fill="#ffff00"/>
<rect x="371" y="391" width="1" height="2" fill="#00ff00"/>
<rect x="372" y="374" width="1" height="2" fill="#ffff00"/>
<rect x="373" y="374" width="1" height="2" fill="#00ff00"/>
<rect x="372" y="391" width="1" height="2" fill="#ffff00"/>
<rect x="373" y="391" width="1" height="2" fill="#00ff00"/>
<rect x="374" y="374" width="1" height="2" fill="#ffff00"/>
<rect x="375" y="374" width="1" height="2" fill="#00ff00"/>
<rect x="374" y="391" width="1" height="2" fill="#ffff00"/>
<rect x="375" y="391" width="1" height="2" fill="#00ff00"/>
<rect x="376" y="374" width="1" height="2" fill="#ffff00"/>
<rect x="377" y="374" width="1" height="2" fill="#00ff00"/>
<rect x="376" y="391" width="1" height="2" fill="#ffff00"/>
<rect x="377" y="391" width="1" height="2" fill="#00ff00"/>
<rect x="378" y="374" width="1" height="2" fill="#ffff00"/>
<rect x="379" y="374" width="1" height="2" fill="#00ff00"/>
<rect x="378" y="391" width="1" height="2" fill="#ffff00"/>
<rect x="379" y="391" width="1" height="2" fill="#00ff00"/>
<rect x="380" y="374" width="1" height="2" fill="#ffff00"/>
<rect x="381" y="374" width="1" height="2" fill="#00ff00"/>
<rect x="380" y="391" width="1" height="2" fill="#ffff00"/>
<rect x="381" y="391" width="1" height="2" fill="#00ff00"/>
<rect x="382" y="374" width="1" height="2" fill="#ffff00"/>
<rect x="383" y="374" width="1" height="2" fill="#00ff00"/>
<rect x="382" y="391" width="1" height="2" fill="#ffff00"/>
<rect x="383" y="391" width="1" height="2" fill="#00ff00"/>
<rect x="384" y="374" width="1" height="2" fill="#ffff00"/>
<rect x="385" y="374" width="1" height="2" fill="#00ff00"/>
<rect x="384" y="391" width="1" height="2" fill="#ffff00"/>
<rect x="385" y="391" width="1" height="2" fill="#00ff00"/>
<rect x="386" y="374" width="1" height="2" fill="#ffff00"/>
<rect x="387" y="374" width="1" height="2" fill="#00ff00"/>
<rect x="386" y="391" width="1" height="2" fill="#ffff00"/>
<rect x="387" y="391" width="1" height="2" fill="#00ff00"/>
<rect x="388" y="374" width="1" height="2" fill="#ffff00"/>
<rect x="389" y="374" width="1" height="2" fill="#00ff00"/>
<rect x="388" y="391" width="1" height="2" fill="#ffff00"/>
<rect x="389" y="391" width="1" height="2" fill="#00ff00"/>
<rect x="324" y="374" width="1" height="19" fill="#00ff00"/>
<rect x="327" y="376" width="11" height="15" fill="#ffff00"/>
<line x1="322" y1="391" x2="334" y2="376" stroke="#000" stroke-width="1"/>
<line x1="325" y1="391" x2="337" y2="376" stroke="#000" stroke-width="1"/>
<line x1="328" y1="391" x2="340" y2="376" stroke="#000" stroke-width="1"/>
<line x1="331" y1="391" x2="343" y2="376" stroke="#000" stroke-width="1"/>
<line x1="334" y1="391" x2="346" y2="376" stroke="#000" stroke-width="1"/>
<line x1="337" y1="391" x2="349" y2="376" stroke="#000" stroke-width="1"/>
<rect x="327" y="375" width="1" height="17" fill="#00ff00"/>
<rect x="338" y="375" width="1" height="17" fill="#00ff00"/>
<circle cx="344.5" cy="384.5" r="4.6" fill="none" stroke="#00ff00" stroke-width="1"/>
<circle cx="344.5" cy="384.5" r="1.5" fill="#ffff00" stroke="#ffff00" stroke-width="1"/>
<rect x="339" y="384" width="3" height="1" fill="#ff0000"/>
<rect x="347" y="384" width="3" height="1" fill="#ff0000"/>
<rect x="344" y="379" width="1" height="2" fill="#ff0000"/>
<path d="M324.5 377.5 A6 6 0 0 0 324.5 389.5" fill="none" stroke="#00ff00" stroke-width="1"/>
<path d="M324.5 379.5 A4.5 4.5 0 0 0 324.5 387.5" fill="none" stroke="#00ff00" stroke-width="1"/>
<rect x="387" y="374" width="133" height="1" fill="#00ff00"/>
<rect x="519" y="374" width="1" height="15" fill="#00ff00"/>
<rect x="390" y="388" width="130" height="1" fill="#00ff00"/>
<rect x="390" y="392" width="131" height="1" fill="#ff00ff"/>
<rect x="519" y="388" width="1" height="5" fill="#ff00ff"/>
<rect x="386" y="374" width="1" height="2" fill="#ffff00"/>
<rect x="387" y="376" width="1" height="3" fill="#ffff00"/>
<rect x="388" y="379" width="1" height="2" fill="#ffff00"/>
<rect x="388" y="380" width="1" height="2" fill="#ffff00"/>
<rect x="389" y="382" width="1" height="3" fill="#ffff00"/>
<rect x="389" y="384" width="1" height="9" fill="#ffff00"/>
<rect x="390" y="393" width="1" height="10" fill="#ffff00"/>
<rect x="322" y="402" width="193" height="1" fill="#00ff00"/>
<rect x="282" y="407" width="268" height="2" fill="#00ff00"/>
<rect x="283" y="407" width="1" height="15" fill="#00ff00"/>
<rect x="548" y="407" width="1" height="15" fill="#00ff00"/>
<rect x="274" y="391" width="1" height="1" fill="#00ff00"/>
<rect x="275" y="392" width="1" height="2" fill="#00ff00"/>
<rect x="276" y="394" width="1" height="2" fill="#00ff00"/>
<rect x="277" y="396" width="1" height="2" fill="#00ff00"/>
<rect x="278" y="398" width="1" height="2" fill="#00ff00"/>
<rect x="279" y="400" width="1" height="2" fill="#00ff00"/>
<rect x="280" y="402" width="1" height="2" fill="#00ff00"/>
<rect x="281" y="404" width="1" height="2" fill="#00ff00"/>
<rect x="282" y="406" width="1" height="2" fill="#00ff00"/>
<rect x="287" y="404" width="1" height="7" fill="#ff0000"/>
<rect x="293" y="404" width="1" height="7" fill="#ff0000"/>
<rect x="300" y="392" width="1" height="1" fill="#ffff00"/>
<rect x="301" y="392" width="1" height="1" fill="#00ff00"/>
<rect x="302" y="392" width="1" height="1" fill="#ffff00"/>
<rect x="300" y="393" width="1" height="1" fill="#00ff00"/>
<rect x="301" y="393" width="1" height="1" fill="#ffff00"/>
<rect x="302" y="393" width="1" height="1" fill="#00ff00"/>
<rect x="300" y="394" width="1" height="1" fill="#ffff00"/>
<rect x="301" y="394" width="1" height="1" fill="#00ff00"/>
<rect x="302" y="394" width="1" height="1" fill="#ffff00"/>
<rect x="300" y="395" width="1" height="1" fill="#00ff00"/>
<rect x="301" y="395" width="1" height="1" fill="#ffff00"/>
<rect x="302" y="395" width="1" height="1" fill="#00ff00"/>
<rect x="300" y="396" width="1" height="1" fill="#ffff00"/>
<rect x="301" y="396" width="1" height="1" fill="#00ff00"/>
<rect x="302" y="396" width="1" height="1" fill="#ffff00"/>
<rect x="300" y="397" width="1" height="1" fill="#00ff00"/>
<rect x="301" y="397" width="1" height="1" fill="#ffff00"/>
<rect x="302" y="397" width="1" height="1" fill="#00ff00"/>
<rect x="300" y="398" width="1" height="1" fill="#ffff00"/>
<rect x="301" y="398" width="1" height="1" fill="#00ff00"/>
<rect x="302" y="398" width="1" height="1" fill="#ffff00"/>
<rect x="300" y="399" width="1" height="1" fill="#00ff00"/>
<rect x="301" y="399" width="1" height="1" fill="#ffff00"/>
<rect x="302" y="399" width="1" height="1" fill="#00ff00"/>
<rect x="300" y="400" width="1" height="1" fill="#ffff00"/>
<rect x="301" y="400" width="1" height="1" fill="#00ff00"/>
<rect x="302" y="400" width="1" height="1" fill="#ffff00"/>
<rect x="300" y="401" width="1" height="1" fill="#00ff00"/>
<rect x="301" y="401" width="1" height="1" fill="#ffff00"/>
<rect x="302" y="401" width="1" height="1" fill="#00ff00"/>
<rect x="300" y="402" width="1" height="1" fill="#ffff00"/>
<rect x="301" y="402" width="1" height="1" fill="#00ff00"/>
<rect x="302" y="402" width="1" height="1" fill="#ffff00"/>
<rect x="300" y="403" width="1" height="1" fill="#00ff00"/>
<rect x="301" y="403" width="1" height="1" fill="#ffff00"/>
<rect x="302" y="403" width="1" height="1" fill="#00ff00"/>
<rect x="300" y="404" width="1" height="1" fill="#ffff00"/>
<rect x="301" y="404" width="1" height="1" fill="#00ff00"/>
<rect x="302" y="404" width="1" height="1" fill="#ffff00"/>
<rect x="300" y="405" width="1" height="1" fill="#00ff00"/>
<rect x="301" y="405" width="1" height="1" fill="#ffff00"/>
<rect x="302" y="405" width="1" height="1" fill="#00ff00"/>
<rect x="300" y="406" width="1" height="1" fill="#ffff00"/>
<rect x="301" y="406" width="1" height="1" fill="#00ff00"/>
<rect x="302" y="406" width="1" height="1" fill="#ffff00"/>
<rect x="300" y="407" width="1" height="1" fill="#00ff00"/>
<rect x="301" y="407" width="1" height="1" fill="#ffff00"/>
<rect x="302" y="407" width="1" height="1" fill="#00ff00"/>
<rect x="300" y="408" width="1" height="1" fill="#ffff00"/>
<rect x="301" y="408" width="1" height="1" fill="#00ff00"/>
<rect x="302" y="408" width="1" height="1" fill="#ffff00"/>
<rect x="300" y="409" width="1" height="1" fill="#00ff00"/>
<rect x="301" y="409" width="1" height="1" fill="#ffff00"/>
<rect x="302" y="409" width="1" height="1" fill="#00ff00"/>
<rect x="300" y="410" width="1" height="1" fill="#ffff00"/>
<rect x="301" y="410" width="1" height="1" fill="#00ff00"/>
<rect x="302" y="410" width="1" height="1" fill="#ffff00"/>
<rect x="300" y="411" width="1" height="1" fill="#00ff00"/>
<rect x="301" y="411" width="1" height="1" fill="#ffff00"/>
<rect x="302" y="411" width="1" height="1" fill="#00ff00"/>
<rect x="300" y="412" width="1" height="1" fill="#ffff00"/>
<rect x="301" y="412" width="1" height="1" fill="#00ff00"/>
<rect x="302" y="412" width="1" height="1" fill="#ffff00"/>
<rect x="300" y="413" width="1" height="1" fill="#00ff00"/>
<rect x="301" y="413" width="1" height="1" fill="#ffff00"/>
<rect x="302" y="413" width="1" height="1" fill="#00ff00"/>
<rect x="300" y="414" width="1" height="1" fill="#ffff00"/>
<rect x="301" y="414" width="1" height="1" fill="#00ff00"/>
<rect x="302" y="414" width="1" height="1" fill="#ffff00"/>
<rect x="300" y="415" width="1" height="1" fill="#00ff00"/>
<rect x="301" y="415" width="1" height="1" fill="#ffff00"/>
<rect x="302" y="415" width="1" height="1" fill="#00ff00"/>
<rect x="301.5" y="391.5" width="13" height="16" fill="none" stroke="#00ff00" stroke-width="1"/>
<rect x="303" y="395" width="5" height="1" fill="#ff0000"/>
<rect x="305" y="393" width="1" height="5" fill="#ff0000"/>
<rect x="309" y="395" width="5" height="1" fill="#ff0000"/>
<rect x="311" y="393" width="1" height="5" fill="#ff0000"/>
<rect x="303" y="404" width="5" height="1" fill="#ff0000"/>
<rect x="305" y="402" width="1" height="5" fill="#ff0000"/>
<rect x="309" y="404" width="5" height="1" fill="#ff0000"/>
<rect x="311" y="402" width="1" height="5" fill="#ff0000"/>
<rect x="326" y="403" width="1" height="8" fill="#ff0000"/>
<rect x="329" y="401" width="1" height="5" fill="#ff0000"/>
<rect x="332" y="399" width="1" height="13" fill="#ff0000"/>
<rect x="335" y="401" width="1" height="5" fill="#ff0000"/>
<rect x="384" y="407" width="1" height="1" fill="#ffff00"/>
<rect x="385" y="408" width="1" height="1" fill="#ffff00"/>
<rect x="386" y="409" width="1" height="1" fill="#ffff00"/>
<rect x="387" y="410" width="1" height="1" fill="#ffff00"/>
<rect x="387" y="410" width="1" height="3" fill="#ffff00"/>
<rect x="386" y="413" width="1" height="2" fill="#ffff00"/>
<rect x="386" y="414" width="1" height="1" fill="#ffff00"/>
<rect x="385" y="415" width="1" height="2" fill="#ffff00"/>
<rect x="384" y="417" width="1" height="1" fill="#ffff00"/>
<rect x="384" y="417" width="1" height="1" fill="#ffff00"/>
<rect x="385" y="418" width="1" height="2" fill="#ffff00"/>
<rect x="386" y="420" width="1" height="2" fill="#ffff00"/>
<circle cx="422.5" cy="384.5" r="6.2" fill="none" stroke="#00ff00" stroke-width="1"/>
<rect x="415" y="384" width="15" height="1" fill="#ff0000"/>
<circle cx="500.5" cy="384.5" r="6.2" fill="none" stroke="#00ff00" stroke-width="1"/>
<rect x="493" y="384" width="15" height="1" fill="#ff0000"/>
<rect x="500" y="377" width="1" height="15" fill="#ff0000"/>
<rect x="511" y="399" width="1" height="12" fill="#ff0000"/>
<rect x="508" y="401" width="1" height="6" fill="#ff0000"/>
<rect x="514" y="401" width="1" height="6" fill="#ff0000"/>
<rect x="518" y="404" width="1" height="6" fill="#ff0000"/>
<rect x="527" y="404" width="1" height="6" fill="#ff0000"/>
<rect x="540" y="404" width="1" height="6" fill="#ff0000"/>
<rect x="518" y="360" width="7" height="1" fill="#ff0000"/>
<rect x="518" y="365" width="7" height="1" fill="#ff0000"/>
<rect x="518" y="392" width="7" height="1" fill="#ff0000"/>
<rect x="518" y="398" width="7" height="1" fill="#ff0000"/>
<rect x="546" y="325" width="7" height="1" fill="#ff0000"/>
<rect x="553" y="324" width="13" height="1" fill="#ff0000"/>
<rect x="566" y="323" width="13" height="1" fill="#ff0000"/>
<rect x="579" y="322" width="13" height="1" fill="#ff0000"/>
<rect x="592" y="321" width="13" height="1" fill="#ff0000"/>
<rect x="605" y="320" width="12" height="1" fill="#ff0000"/>
<rect x="617" y="319" width="13" height="1" fill="#ff0000"/>
<rect x="630" y="318" width="13" height="1" fill="#ff0000"/>
<rect x="643" y="317" width="13" height="1" fill="#ff0000"/>
<rect x="656" y="316" width="7" height="1" fill="#ff0000"/>
<rect x="557" y="321" width="7" height="1" fill="#00ff00"/>
<rect x="564" y="320" width="12" height="1" fill="#00ff00"/>
<rect x="576" y="319" width="13" height="1" fill="#00ff00"/>
<rect x="589" y="318" width="13" height="1" fill="#00ff00"/>
<rect x="602" y="317" width="12" height="1" fill="#00ff00"/>
<rect x="614" y="316" width="13" height="1" fill="#00ff00"/>
<rect x="627" y="315" width="12" height="1" fill="#00ff00"/>
<rect x="639" y="314" width="7" height="1" fill="#00ff00"/>
<rect x="557" y="327" width="7" height="1" fill="#00ff00"/>
<rect x="564" y="326" width="12" height="1" fill="#00ff00"/>
<rect x="576" y="325" width="13" height="1" fill="#00ff00"/>
<rect x="589" y="324" width="13" height="1" fill="#00ff00"/>
<rect x="602" y="323" width="12" height="1" fill="#00ff00"/>
<rect x="614" y="322" width="13" height="1" fill="#00ff00"/>
<rect x="627" y="321" width="12" height="1" fill="#00ff00"/>
<rect x="639" y="320" width="7" height="1" fill="#00ff00"/>
<rect x="546" y="336" width="7" height="1" fill="#ff0000"/>
<rect x="553" y="337" width="13" height="1" fill="#ff0000"/>
<rect x="566" y="338" width="13" height="1" fill="#ff0000"/>
<rect x="579" y="339" width="13" height="1" fill="#ff0000"/>
<rect x="592" y="340" width="12" height="1" fill="#ff0000"/>
<rect x="604" y="341" width="13" height="1" fill="#ff0000"/>
<rect x="617" y="342" width="13" height="1" fill="#ff0000"/>
<rect x="630" y="343" width="13" height="1" fill="#ff0000"/>
<rect x="643" y="344" width="13" height="1" fill="#ff0000"/>
<rect x="656" y="345" width="7" height="1" fill="#ff0000"/>
<rect x="557" y="334" width="7" height="1" fill="#00ff00"/>
<rect x="564" y="335" width="12" height="1" fill="#00ff00"/>
<rect x="576" y="336" width="13" height="1" fill="#00ff00"/>
<rect x="589" y="337" width="12" height="1" fill="#00ff00"/>
<rect x="601" y="338" width="13" height="1" fill="#00ff00"/>
<rect x="614" y="339" width="13" height="1" fill="#00ff00"/>
<rect x="627" y="340" width="12" height="1" fill="#00ff00"/>
<rect x="639" y="341" width="7" height="1" fill="#00ff00"/>
<rect x="557" y="339" width="7" height="1" fill="#00ff00"/>
<rect x="564" y="340" width="12" height="1" fill="#00ff00"/>
<rect x="576" y="341" width="13" height="1" fill="#00ff00"/>
<rect x="589" y="342" width="12" height="1" fill="#00ff00"/>
<rect x="601" y="343" width="13" height="1" fill="#00ff00"/>
<rect x="614" y="344" width="13" height="1" fill="#00ff00"/>
<rect x="627" y="345" width="12" height="1" fill="#00ff00"/>
<rect x="639" y="346" width="7" height="1" fill="#00ff00"/>
<rect x="547" y="321" width="3" height="9" fill="#00ff00"/>
<rect x="552" y="321" width="1" height="2" fill="#00ff00"/>
<rect x="551" y="323" width="1" height="1" fill="#00ff00"/>
<rect x="552" y="321" width="5" height="1" fill="#00ff00"/>
<rect x="556" y="321" width="1" height="1" fill="#00ff00"/>
<rect x="557" y="322" width="1" height="2" fill="#00ff00"/>
<rect x="557" y="323" width="1" height="5" fill="#00ff00"/>
<rect x="557" y="327" width="1" height="2" fill="#00ff00"/>
<rect x="556" y="329" width="1" height="1" fill="#00ff00"/>
<rect x="552" y="329" width="5" height="1" fill="#00ff00"/>
<rect x="551" y="327" width="1" height="1" fill="#00ff00"/>
<rect x="552" y="328" width="1" height="2" fill="#00ff00"/>
<rect x="551" y="323" width="1" height="5" fill="#00ff00"/>
<rect x="551" y="326" width="4" height="3" fill="#00ff00"/>
<rect x="538" y="322" width="8" height="1" fill="#00ff00"/>
<rect x="538" y="328" width="8" height="1" fill="#00ff00"/>
<rect x="538" y="322" width="1" height="7" fill="#00ff00"/>
<rect x="547" y="332" width="3" height="9" fill="#00ff00"/>
<rect x="552" y="332" width="1" height="2" fill="#00ff00"/>
<rect x="551" y="334" width="1" height="1" fill="#00ff00"/>
<rect x="552" y="332" width="5" height="1" fill="#00ff00"/>
<rect x="556" y="332" width="1" height="1" fill="#00ff00"/>
<rect x="557" y="333" width="1" height="2" fill="#00ff00"/>
<rect x="557" y="334" width="1" height="5" fill="#00ff00"/>
<rect x="557" y="338" width="1" height="2" fill="#00ff00"/>
<rect x="556" y="340" width="1" height="1" fill="#00ff00"/>
<rect x="552" y="340" width="5" height="1" fill="#00ff00"/>
<rect x="551" y="338" width="1" height="1" fill="#00ff00"/>
<rect x="552" y="339" width="1" height="2" fill="#00ff00"/>
<rect x="551" y="334" width="1" height="5" fill="#00ff00"/>
<rect x="551" y="337" width="4" height="3" fill="#00ff00"/>
<rect x="538" y="333" width="8" height="1" fill="#00ff00"/>
<rect x="538" y="339" width="8" height="1" fill="#00ff00"/>
<rect x="538" y="333" width="1" height="7" fill="#00ff00"/>
<rect x="553" y="320" width="1" height="23" fill="#ff0000"/>
<rect x="597" y="318" width="1" height="7" fill="#00ff00"/>
<rect x="600" y="318" width="1" height="7" fill="#00ff00"/>
<rect x="606" y="318" width="1" height="7" fill="#00ff00"/>
<rect x="606" y="319" width="3" height="5" fill="#00ff00"/>
<rect x="597" y="318" width="4" height="1" fill="#00ff00"/>
<rect x="597" y="324" width="4" height="1" fill="#00ff00"/>
<rect x="597" y="338" width="1" height="7" fill="#00ff00"/>
<rect x="600" y="338" width="1" height="7" fill="#00ff00"/>
<rect x="606" y="338" width="1" height="7" fill="#00ff00"/>
<rect x="606" y="339" width="3" height="5" fill="#00ff00"/>
<rect x="597" y="338" width="4" height="1" fill="#00ff00"/>
<rect x="597" y="344" width="4" height="1" fill="#00ff00"/>
<rect x="645.5" y="314.5" width="4" height="5" fill="none" stroke="#00ff00" stroke-width="1"/>
<rect x="653" y="312" width="1" height="2" fill="#00ff00"/>
<rect x="652" y="314" width="1" height="1" fill="#00ff00"/>
<rect x="653" y="312" width="5" height="1" fill="#00ff00"/>
<rect x="657" y="312" width="1" height="1" fill="#00ff00"/>
<rect x="658" y="313" width="1" height="2" fill="#00ff00"/>
<rect x="658" y="314" width="1" height="5" fill="#00ff00"/>
<rect x="658" y="318" width="1" height="2" fill="#00ff00"/>
<rect x="657" y="320" width="1" height="1" fill="#00ff00"/>
<rect x="653" y="320" width="5" height="1" fill="#00ff00"/>
<rect x="652" y="318" width="1" height="1" fill="#00ff00"/>
<rect x="653" y="319" width="1" height="2" fill="#00ff00"/>
<rect x="652" y="314" width="1" height="5" fill="#00ff00"/>
<rect x="659" y="312" width="3" height="10" fill="#00ff00"/>
<rect x="655" y="311" width="1" height="12" fill="#ff0000"/>
<rect x="662" y="313" width="9" height="1" fill="#00ff00"/>
<rect x="662" y="319" width="9" height="1" fill="#00ff00"/>
<rect x="651" y="316" width="70" height="1" fill="#ff0000"/>
<rect x="652" y="317" width="2" height="1" fill="#ff0000"/>
<rect x="654" y="316" width="2" height="1" fill="#ff0000"/>
<rect x="656" y="315" width="1" height="1" fill="#ff0000"/>
<rect x="645.5" y="343.5" width="4" height="5" fill="none" stroke="#00ff00" stroke-width="1"/>
<rect x="653" y="341" width="1" height="2" fill="#00ff00"/>
<rect x="652" y="343" width="1" height="1" fill="#00ff00"/>
<rect x="653" y="341" width="5" height="1" fill="#00ff00"/>
<rect x="657" y="341" width="1" height="1" fill="#00ff00"/>
<rect x="658" y="342" width="1" height="2" fill="#00ff00"/>
<rect x="658" y="343" width="1" height="5" fill="#00ff00"/>
<rect x="658" y="347" width="1" height="2" fill="#00ff00"/>
<rect x="657" y="349" width="1" height="1" fill="#00ff00"/>
<rect x="653" y="349" width="5" height="1" fill="#00ff00"/>
<rect x="652" y="347" width="1" height="1" fill="#00ff00"/>
<rect x="653" y="348" width="1" height="2" fill="#00ff00"/>
<rect x="652" y="343" width="1" height="5" fill="#00ff00"/>
<rect x="659" y="341" width="3" height="10" fill="#00ff00"/>
<rect x="655" y="340" width="1" height="12" fill="#ff0000"/>
<rect x="662" y="342" width="9" height="1" fill="#00ff00"/>
<rect x="662" y="348" width="9" height="1" fill="#00ff00"/>
<rect x="651" y="345" width="70" height="1" fill="#ff0000"/>
<rect x="652" y="346" width="2" height="1" fill="#ff0000"/>
<rect x="654" y="345" width="2" height="1" fill="#ff0000"/>
<rect x="656" y="344" width="1" height="1" fill="#ff0000"/>
<rect x="654" y="343" width="4" height="6" fill="#00ff00"/>
<rect x="694" y="282" width="1" height="99" fill="#ff0000"/>
<rect x="692.0" y="288.0" width="4" height="4" fill="none" stroke="#00ff00" stroke-width="2"/>
<rect x="692" y="293" width="1" height="3" fill="#00ff00"/>
<rect x="695" y="293" width="1" height="3" fill="#00ff00"/>
<rect x="682.5" y="295.5" width="24" height="2" fill="none" stroke="#00ff00" stroke-width="1"/>
<path d="M676.5 327 V301.5 Q676.5 297.5 680.5 297.5 H709 Q713.5 297.5 713.5 301.5 V327" fill="none" stroke="#00ff00" stroke-width="1"/>
<rect x="670.5" y="310.5" width="2" height="13" fill="none" stroke="#00ff00" stroke-width="1"/>
<rect x="673" y="310" width="1" height="1" fill="#00ff00"/>
<rect x="674" y="309" width="2" height="1" fill="#00ff00"/>
<rect x="676" y="308" width="1" height="1" fill="#00ff00"/>
<rect x="673" y="310" width="1" height="15" fill="#00ff00"/>
<rect x="673" y="324" width="1" height="1" fill="#00ff00"/>
<rect x="674" y="325" width="2" height="1" fill="#00ff00"/>
<rect x="676" y="326" width="1" height="1" fill="#00ff00"/>
<rect x="715.5" y="310.5" width="2" height="14" fill="none" stroke="#00ff00" stroke-width="1"/>
<rect x="713" y="308" width="1" height="1" fill="#00ff00"/>
<rect x="714" y="309" width="1" height="1" fill="#00ff00"/>
<rect x="715" y="310" width="1" height="1" fill="#00ff00"/>
<rect x="713" y="326" width="1" height="1" fill="#00ff00"/>
<rect x="714" y="325" width="1" height="1" fill="#00ff00"/>
<rect x="715" y="324" width="1" height="1" fill="#00ff00"/>
<rect x="670.5" y="327.5" width="47" height="7" fill="none" stroke="#00ff00" stroke-width="1"/>
<rect x="672" y="329" width="44" height="1" fill="#00ff00"/>
<rect x="672" y="332" width="44" height="1" fill="#00ff00"/>
<rect x="676" y="334" width="1" height="35" fill="#00ff00"/>
<rect x="713" y="334" width="1" height="35" fill="#00ff00"/>
<rect x="670.5" y="338.5" width="2" height="15" fill="none" stroke="#00ff00" stroke-width="1"/>
<rect x="673" y="338" width="1" height="1" fill="#00ff00"/>
<rect x="674" y="337" width="2" height="1" fill="#00ff00"/>
<rect x="676" y="336" width="1" height="1" fill="#00ff00"/>
<rect x="673" y="338" width="1" height="31" fill="#00ff00"/>
<rect x="715.5" y="338.5" width="2" height="15" fill="none" stroke="#00ff00" stroke-width="1"/>
<rect x="713" y="336" width="1" height="1" fill="#00ff00"/>
<rect x="714" y="337" width="1" height="1" fill="#00ff00"/>
<rect x="715" y="338" width="1" height="1" fill="#00ff00"/>
<rect x="715" y="353" width="1" height="16" fill="#00ff00"/>
<rect x="669.5" y="368.5" width="50" height="5" fill="none" stroke="#00ff00" stroke-width="1"/>
<rect x="682" y="372" width="26" height="1" fill="#00ff00"/>
<rect x="694" y="365" width="1" height="1" fill="#00ff00"/>
<rect x="693" y="366" width="1" height="2" fill="#00ff00"/>
<rect x="692" y="368" width="1" height="1" fill="#00ff00"/>
<rect x="694" y="365" width="1" height="1" fill="#00ff00"/>
<rect x="695" y="366" width="1" height="2" fill="#00ff00"/>
<rect x="696" y="368" width="1" height="1" fill="#00ff00"/>
<rect x="689" y="368" width="10" height="1" fill="#ff0000"/>
<rect x="684" y="292" width="1" height="10" fill="#ff0000"/>
<rect x="684" y="327" width="1" height="9" fill="#ff0000"/>
<rect x="703" y="292" width="1" height="10" fill="#ff0000"/>
<rect x="703" y="327" width="1" height="9" fill="#ff0000"/>
<rect x="672" y="367" width="1" height="8" fill="#ff0000"/>
<rect x="715" y="367" width="1" height="8" fill="#ff0000"/>
<rect x="672" y="327" width="1" height="9" fill="#ff0000"/>
<rect x="715" y="327" width="1" height="9" fill="#ff0000"/>
<rect x="662" y="345" width="79" height="1" fill="#ff0000"/>
<rect x="719.5" y="342.5" width="7" height="6" fill="none" stroke="#00ff00" stroke-width="1"/>
<rect x="726" y="340" width="1" height="12" fill="#00ff00"/>
<rect x="729" y="340" width="1" height="12" fill="#00ff00"/>
<rect x="726" y="340" width="4" height="1" fill="#00ff00"/>
<rect x="726" y="351" width="4" height="1" fill="#00ff00"/>
<rect x="729.5" y="341.5" width="8" height="8" fill="none" stroke="#00ff00" stroke-width="1"/>
<rect x="635" y="373" width="167" height="1" fill="#00ff00"/>
<rect x="635" y="375" width="167" height="1" fill="#00ff00"/>
<rect x="600" y="391" width="346" height="1" fill="#00ff00"/>
<rect x="635" y="373" width="1" height="19" fill="#00ff00"/>
<rect x="801" y="373" width="1" height="19" fill="#00ff00"/>
<rect x="671" y="375" width="1" height="17" fill="#00ff00"/>
<rect x="673" y="375" width="1" height="17" fill="#00ff00"/>
<rect x="707" y="375" width="1" height="17" fill="#00ff00"/>
<rect x="709" y="375" width="1" height="17" fill="#00ff00"/>
<rect x="743" y="375" width="1" height="17" fill="#00ff00"/>
<rect x="745" y="375" width="1" height="17" fill="#00ff00"/>
<rect x="779" y="375" width="1" height="17" fill="#00ff00"/>
<rect x="781" y="375" width="1" height="17" fill="#00ff00"/>
<rect x="766" y="306" width="1" height="75" fill="#ff0000"/>
<circle cx="766.5" cy="314.5" r="2.2" fill="none" stroke="#00ff00" stroke-width="1"/>
<rect x="766" y="317" width="1" height="2" fill="#00ff00"/>
<rect x="759.5" y="318.5" width="13" height="3" fill="none" stroke="#00ff00" stroke-width="1"/>
<rect x="754" y="321" width="1" height="23" fill="#00ff00"/>
<rect x="754" y="321" width="25" height="1" fill="#00ff00"/>
<rect x="778" y="321" width="1" height="23" fill="#00ff00"/>
<rect x="749" y="335" width="6" height="1" fill="#00ff00"/>
<rect x="742" y="336" width="8" height="1" fill="#00ff00"/>
<rect x="778" y="335" width="6" height="1" fill="#00ff00"/>
<rect x="783" y="336" width="7" height="1" fill="#00ff00"/>
<rect x="742" y="336" width="1" height="19" fill="#00ff00"/>
<rect x="790" y="336" width="1" height="19" fill="#00ff00"/>
<rect x="742" y="354" width="3" height="1" fill="#00ff00"/>
<rect x="788" y="354" width="3" height="1" fill="#00ff00"/>
<rect x="739.5" y="337.5" width="3" height="17" fill="none" stroke="#00ff00" stroke-width="1"/>
<rect x="790.5" y="336.5" width="3" height="18" fill="none" stroke="#00ff00" stroke-width="1"/>
<rect x="746" y="338" width="8" height="1" fill="#00ff00"/>
<rect x="744" y="340" width="1" height="1" fill="#00ff00"/>
<rect x="745" y="339" width="1" height="1" fill="#00ff00"/>
<rect x="746" y="338" width="1" height="1" fill="#00ff00"/>
<rect x="744" y="340" width="1" height="12" fill="#00ff00"/>
<rect x="744" y="351" width="1" height="1" fill="#00ff00"/>
<rect x="745" y="352" width="1" height="1" fill="#00ff00"/>
<rect x="746" y="353" width="1" height="1" fill="#00ff00"/>
<rect x="746" y="353" width="5" height="1" fill="#00ff00"/>
<rect x="750" y="353" width="1" height="1" fill="#00ff00"/>
<rect x="751" y="354" width="1" height="1" fill="#00ff00"/>
<rect x="752" y="355" width="1" height="1" fill="#00ff00"/>
<rect x="753" y="356" width="1" height="1" fill="#00ff00"/>
<rect x="779" y="338" width="8" height="1" fill="#00ff00"/>
<rect x="786" y="338" width="1" height="1" fill="#00ff00"/>
<rect x="787" y="339" width="1" height="1" fill="#00ff00"/>
<rect x="788" y="340" width="1" height="1" fill="#00ff00"/>
<rect x="788" y="340" width="1" height="12" fill="#00ff00"/>
<rect x="786" y="353" width="1" height="1" fill="#00ff00"/>
<rect x="787" y="352" width="1" height="1" fill="#00ff00"/>
<rect x="788" y="351" width="1" height="1" fill="#00ff00"/>
<rect x="782" y="353" width="5" height="1" fill="#00ff00"/>
<rect x="779" y="356" width="1" height="1" fill="#00ff00"/>
<rect x="780" y="355" width="1" height="1" fill="#00ff00"/>
<rect x="781" y="354" width="1" height="1" fill="#00ff00"/>
<rect x="782" y="353" width="1" height="1" fill="#00ff00"/>
<rect x="754" y="339" width="2" height="1" fill="#00ff00"/>
<rect x="756" y="338" width="2" height="1" fill="#00ff00"/>
<rect x="757" y="338" width="2" height="1" fill="#00ff00"/>
<rect x="759" y="337" width="1" height="1" fill="#00ff00"/>
<rect x="775" y="338" width="2" height="1" fill="#00ff00"/>
<rect x="777" y="339" width="2" height="1" fill="#00ff00"/>
<rect x="773" y="337" width="1" height="1" fill="#00ff00"/>
<rect x="774" y="338" width="2" height="1" fill="#00ff00"/>
<rect x="744" y="354" width="1" height="16" fill="#00ff00"/>
<rect x="753" y="354" width="1" height="16" fill="#00ff00"/>
<rect x="779" y="354" width="1" height="16" fill="#00ff00"/>
<rect x="788" y="354" width="1" height="16" fill="#00ff00"/>
<rect x="743.5" y="369.5" width="12" height="4" fill="none" stroke="#00ff00" stroke-width="1"/>
<rect x="777.5" y="369.5" width="12" height="4" fill="none" stroke="#00ff00" stroke-width="1"/>
<rect x="756" y="371" width="21" height="2" fill="#00ff00"/>
<rect x="764.5" y="330.5" width="4" height="22" fill="none" stroke="#00ff00" stroke-width="1"/>
<rect x="762" y="352" width="9" height="1" fill="#00ff00"/>
<rect x="742" y="345" width="48" height="2" fill="#ff0000"/>
<rect x="748" y="335" width="1" height="20" fill="#ff0000"/>
<rect x="758" y="341" width="1" height="9" fill="#ff0000"/>
<rect x="773" y="341" width="1" height="9" fill="#ff0000"/>
<rect x="783" y="335" width="1" height="21" fill="#ff0000"/>
<rect x="747" y="367" width="1" height="8" fill="#ff0000"/>
<rect x="784" y="367" width="1" height="8" fill="#ff0000"/>
<rect x="761" y="336" width="11" height="1" fill="#ff0000"/>
<rect x="793" y="343" width="5" height="1" fill="#00ff00"/>
<rect x="793" y="347" width="5" height="1" fill="#00ff00"/>
<rect x="797.5" y="341.5" width="19" height="8" fill="none" stroke="#00ff00" stroke-width="1"/>
<rect x="805" y="340" width="3" height="12" fill="#00ff00"/>
<rect x="816" y="343" width="6" height="1" fill="#00ff00"/>
<rect x="816" y="347" width="6" height="1" fill="#00ff00"/>
<rect x="790" y="345" width="166" height="1" fill="#ff0000"/>
<path d="M837.5 320.5 H826 Q821.5 320.5 821.5 326 V365 Q821.5 370.5 826 370.5 H837.5" fill="none" stroke="#00ff00" stroke-width="1"/>
<rect x="821" y="326" width="2" height="40" fill="#00ff00"/>
<rect x="837" y="322" width="1" height="49" fill="#00ff00"/>
<rect x="837" y="322" width="1" height="1" fill="#00ff00"/>
<rect x="838" y="321" width="1" height="1" fill="#00ff00"/>
<rect x="839" y="320" width="2" height="1" fill="#00ff00"/>
<rect x="841" y="319" width="1" height="1" fill="#00ff00"/>
<rect x="842" y="318" width="1" height="1" fill="#00ff00"/>
<rect x="842" y="318" width="46" height="1" fill="#00ff00"/>
<rect x="887" y="318" width="1" height="1" fill="#00ff00"/>
<rect x="888" y="319" width="1" height="1" fill="#00ff00"/>
<rect x="889" y="320" width="1" height="1" fill="#00ff00"/>
<rect x="890" y="321" width="1" height="1" fill="#00ff00"/>
<rect x="891" y="322" width="1" height="1" fill="#00ff00"/>
<rect x="892" y="323" width="2" height="1" fill="#00ff00"/>
<rect x="894" y="324" width="1" height="1" fill="#00ff00"/>
<rect x="895" y="325" width="1" height="1" fill="#00ff00"/>
<rect x="896" y="326" width="1" height="1" fill="#00ff00"/>
<rect x="897" y="327" width="1" height="1" fill="#00ff00"/>
<rect x="837" y="322" width="51" height="1" fill="#00ff00"/>
<rect x="837" y="370" width="55" height="1" fill="#00ff00"/>
<rect x="891" y="370" width="1" height="1" fill="#00ff00"/>
<rect x="892" y="369" width="1" height="1" fill="#00ff00"/>
<rect x="893" y="368" width="2" height="1" fill="#00ff00"/>
<rect x="895" y="367" width="1" height="1" fill="#00ff00"/>
<rect x="896" y="366" width="1" height="1" fill="#00ff00"/>
<rect x="897" y="365" width="1" height="1" fill="#00ff00"/>
<rect x="897" y="327" width="1" height="39" fill="#00ff00"/>
<rect x="840" y="326" width="47" height="2" fill="#00ff00"/>
<rect x="840" y="331" width="47" height="2" fill="#00ff00"/>
<rect x="840" y="341" width="47" height="2" fill="#00ff00"/>
<rect x="840" y="349" width="47" height="2" fill="#00ff00"/>
<rect x="840" y="354" width="47" height="2" fill="#00ff00"/>
<rect x="840" y="363" width="47" height="2" fill="#00ff00"/>
<rect x="820" y="337" width="3" height="17" fill="#00ff00"/>
<rect x="840.5" y="335.5" width="46" height="2" fill="none" stroke="#00ff00" stroke-width="1"/>
<rect x="840.5" y="358.5" width="46" height="2" fill="none" stroke="#00ff00" stroke-width="1"/>
<rect x="825" y="332" width="9" height="1" fill="#ff0000"/>
<rect x="829" y="328" width="1" height="9" fill="#ff0000"/>
<rect x="825" y="358" width="9" height="1" fill="#ff0000"/>
<rect x="829" y="354" width="1" height="9" fill="#ff0000"/>
<circle cx="864.5" cy="312.5" r="4.4" fill="none" stroke="#00ff00" stroke-width="1"/>
<circle cx="864.5" cy="312.5" r="2.2" fill="none" stroke="#00ff00" stroke-width="1"/>
<rect x="858" y="312" width="13" height="1" fill="#ff0000"/>
<rect x="864" y="306" width="1" height="13" fill="#ff0000"/>
<rect x="864" y="316" width="1" height="3" fill="#00ff00"/>
<rect x="870.5" y="305.5" width="15" height="12" rx="2" fill="none" stroke="#00ff00" stroke-width="2"/>
<rect x="871" y="310" width="17" height="1" fill="#ff0000"/>
<rect x="877.5" y="308.5" width="2" height="4" fill="none" stroke="#00ff00" stroke-width="1"/>
<rect x="897" y="327" width="3" height="1" fill="#00ff00"/>
<rect x="900" y="326" width="2" height="1" fill="#00ff00"/>
<rect x="901" y="326" width="6" height="1" fill="#00ff00"/>
<rect x="907" y="327" width="10" height="1" fill="#00ff00"/>
<rect x="917" y="328" width="6" height="1" fill="#00ff00"/>
<rect x="922" y="328" width="1" height="8" fill="#00ff00"/>
<rect x="922" y="335" width="9" height="1" fill="#00ff00"/>
<rect x="930" y="335" width="1" height="1" fill="#00ff00"/>
<rect x="931" y="336" width="1" height="1" fill="#00ff00"/>
<rect x="932" y="337" width="1" height="1" fill="#00ff00"/>
<rect x="933" y="338" width="1" height="1" fill="#00ff00"/>
<rect x="934" y="339" width="1" height="1" fill="#00ff00"/>
<rect x="897" y="365" width="2" height="1" fill="#00ff00"/>
<rect x="899" y="364" width="4" height="1" fill="#00ff00"/>
<rect x="903" y="363" width="3" height="1" fill="#00ff00"/>
<rect x="906" y="362" width="3" height="1" fill="#00ff00"/>
<rect x="909" y="361" width="4" height="1" fill="#00ff00"/>
<rect x="913" y="360" width="3" height="1" fill="#00ff00"/>
<rect x="916" y="359" width="4" height="1" fill="#00ff00"/>
<rect x="920" y="358" width="3" height="1" fill="#00ff00"/>
<rect x="923" y="357" width="3" height="1" fill="#00ff00"/>
<rect x="926" y="356" width="4" height="1" fill="#00ff00"/>
<rect x="930" y="355" width="2" height="1" fill="#00ff00"/>
<rect x="931" y="355" width="1" height="1" fill="#00ff00"/>
<rect x="932" y="354" width="1" height="1" fill="#00ff00"/>
<rect x="933" y="353" width="1" height="1" fill="#00ff00"/>
<rect x="934" y="352" width="1" height="1" fill="#00ff00"/>
<rect x="931.5" y="338.5" width="4" height="15" fill="none" stroke="#00ff00" stroke-width="1"/>
<rect x="922" y="328" width="1" height="30" fill="#00ff00"/>
<rect x="898" y="338" width="25" height="2" fill="#00ff00"/>
<rect x="898" y="342" width="25" height="2" fill="#00ff00"/>
<rect x="898" y="347" width="25" height="2" fill="#00ff00"/>
<rect x="898" y="352" width="25" height="2" fill="#00ff00"/>
<rect x="898" y="333" width="25" height="1" fill="#00ff00"/>
<circle cx="908.5" cy="332.5" r="1.2" fill="none" stroke="#00ff00" stroke-width="1"/>
<rect x="906.5" y="366.5" width="3" height="2" fill="none" stroke="#00ff00" stroke-width="1"/>
<rect x="830.5" y="367.5" width="50" height="9" fill="none" stroke="#00ff00" stroke-width="1"/>
<rect x="844.5" y="362.5" width="18" height="5" fill="none" stroke="#00ff00" stroke-width="1"/>
<rect x="842" y="374" width="25" height="1" fill="#00ff00"/>
<rect x="811.5" y="376.5" width="120" height="15" fill="none" stroke="#00ff00" stroke-width="1"/>
<rect x="811" y="379" width="121" height="1" fill="#00ff00"/>
<rect x="847" y="379" width="1" height="13" fill="#00ff00"/>
<rect x="850" y="379" width="1" height="13" fill="#00ff00"/>
<rect x="883" y="379" width="1" height="13" fill="#00ff00"/>
<rect x="886" y="379" width="1" height="13" fill="#00ff00"/>
<rect x="790.5" y="373.5" width="11" height="18" fill="none" stroke="#00ff00" stroke-width="1"/>
</svg>
</body>
</html>
